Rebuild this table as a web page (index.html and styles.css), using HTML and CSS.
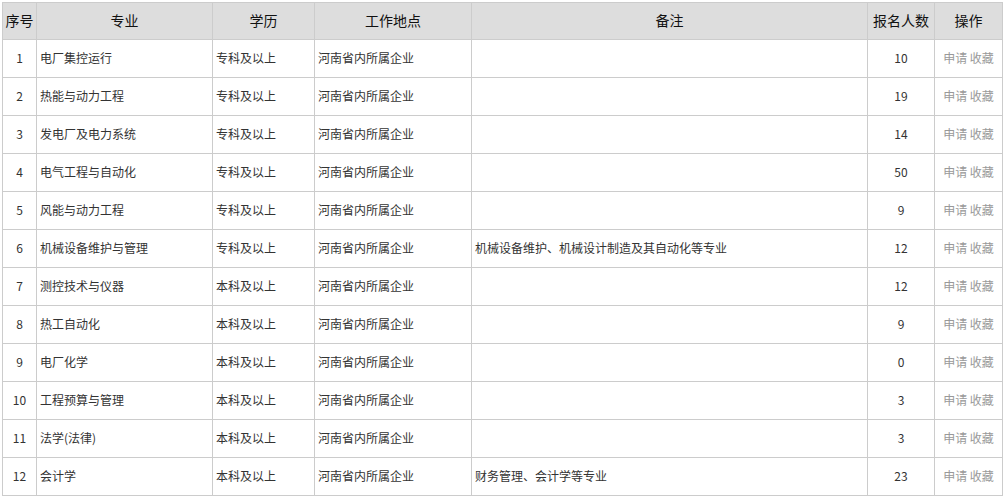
FILE: index.html
```html
<!DOCTYPE html>
<html lang="zh">
<head>
<meta charset="utf-8">
<title>职位列表</title>
<link rel="stylesheet" href="styles.css">
</head>
<body>
<table class="jobs">
  <colgroup>
    <col class="c-no"><col class="c-major"><col class="c-edu"><col class="c-place"><col class="c-note"><col class="c-count"><col class="c-op">
  </colgroup>
  <thead>
    <tr><th>序号</th><th>专业</th><th>学历</th><th>工作地点</th><th>备注</th><th>报名人数</th><th>操作</th></tr>
  </thead>
  <tbody>
    <tr><td class="center">1</td><td>电厂集控运行</td><td>专科及以上</td><td>河南省内所属企业</td><td></td><td class="center">10</td><td class="op">申请 收藏</td></tr>
    <tr><td class="center">2</td><td>热能与动力工程</td><td>专科及以上</td><td>河南省内所属企业</td><td></td><td class="center">19</td><td class="op">申请 收藏</td></tr>
    <tr><td class="center">3</td><td>发电厂及电力系统</td><td>专科及以上</td><td>河南省内所属企业</td><td></td><td class="center">14</td><td class="op">申请 收藏</td></tr>
    <tr><td class="center">4</td><td>电气工程与自动化</td><td>专科及以上</td><td>河南省内所属企业</td><td></td><td class="center">50</td><td class="op">申请 收藏</td></tr>
    <tr><td class="center">5</td><td>风能与动力工程</td><td>专科及以上</td><td>河南省内所属企业</td><td></td><td class="center">9</td><td class="op">申请 收藏</td></tr>
    <tr><td class="center">6</td><td>机械设备维护与管理</td><td>专科及以上</td><td>河南省内所属企业</td><td>机械设备维护、机械设计制造及其自动化等专业</td><td class="center">12</td><td class="op">申请 收藏</td></tr>
    <tr><td class="center">7</td><td>测控技术与仪器</td><td>本科及以上</td><td>河南省内所属企业</td><td></td><td class="center">12</td><td class="op">申请 收藏</td></tr>
    <tr><td class="center">8</td><td>热工自动化</td><td>本科及以上</td><td>河南省内所属企业</td><td></td><td class="center">9</td><td class="op">申请 收藏</td></tr>
    <tr><td class="center">9</td><td>电厂化学</td><td>本科及以上</td><td>河南省内所属企业</td><td></td><td class="center">0</td><td class="op">申请 收藏</td></tr>
    <tr><td class="center">10</td><td>工程预算与管理</td><td>本科及以上</td><td>河南省内所属企业</td><td></td><td class="center">3</td><td class="op">申请 收藏</td></tr>
    <tr><td class="center">11</td><td>法学(法律)</td><td>本科及以上</td><td>河南省内所属企业</td><td></td><td class="center">3</td><td class="op">申请 收藏</td></tr>
    <tr><td class="center">12</td><td>会计学</td><td>本科及以上</td><td>河南省内所属企业</td><td>财务管理、会计学等专业</td><td class="center">23</td><td class="op">申请 收藏</td></tr>
  </tbody>
</table>
</body>
</html>
```
FILE: styles.css
```css
html, body {
  margin: 0;
  padding: 0;
  background: #fff;
}
body {
  padding: 2px;
  font-family: "Noto Sans CJK SC", "Noto Sans", sans-serif;
}
.jobs {
  border-collapse: collapse;
  table-layout: fixed;
  width: 1000px;
  font-size: 12px;
  color: #333;
}
.c-no { width: 34px; }
.c-major { width: 176px; }
.c-edu { width: 102px; }
.c-place { width: 157px; }
.c-note { width: 396px; }
.c-count { width: 67px; }
.c-op { width: 68px; }
.jobs th, .jobs td {
  border: 1px solid #ccc;
  padding: 0 3px 2px;
  white-space: nowrap;
  overflow: hidden;
}
.jobs th {
  height: 34px;
  background: #ddd;
  font-size: 14px;
  font-weight: normal;
  color: #111;
  text-align: center;
  padding: 0 0 2px;
}
.jobs td {
  height: 35px;
  text-align: left;
}
.jobs td.center {
  text-align: center;
}
.jobs td.op {
  text-align: center;
  color: #999;
  padding: 0 0 2px;
}
```
